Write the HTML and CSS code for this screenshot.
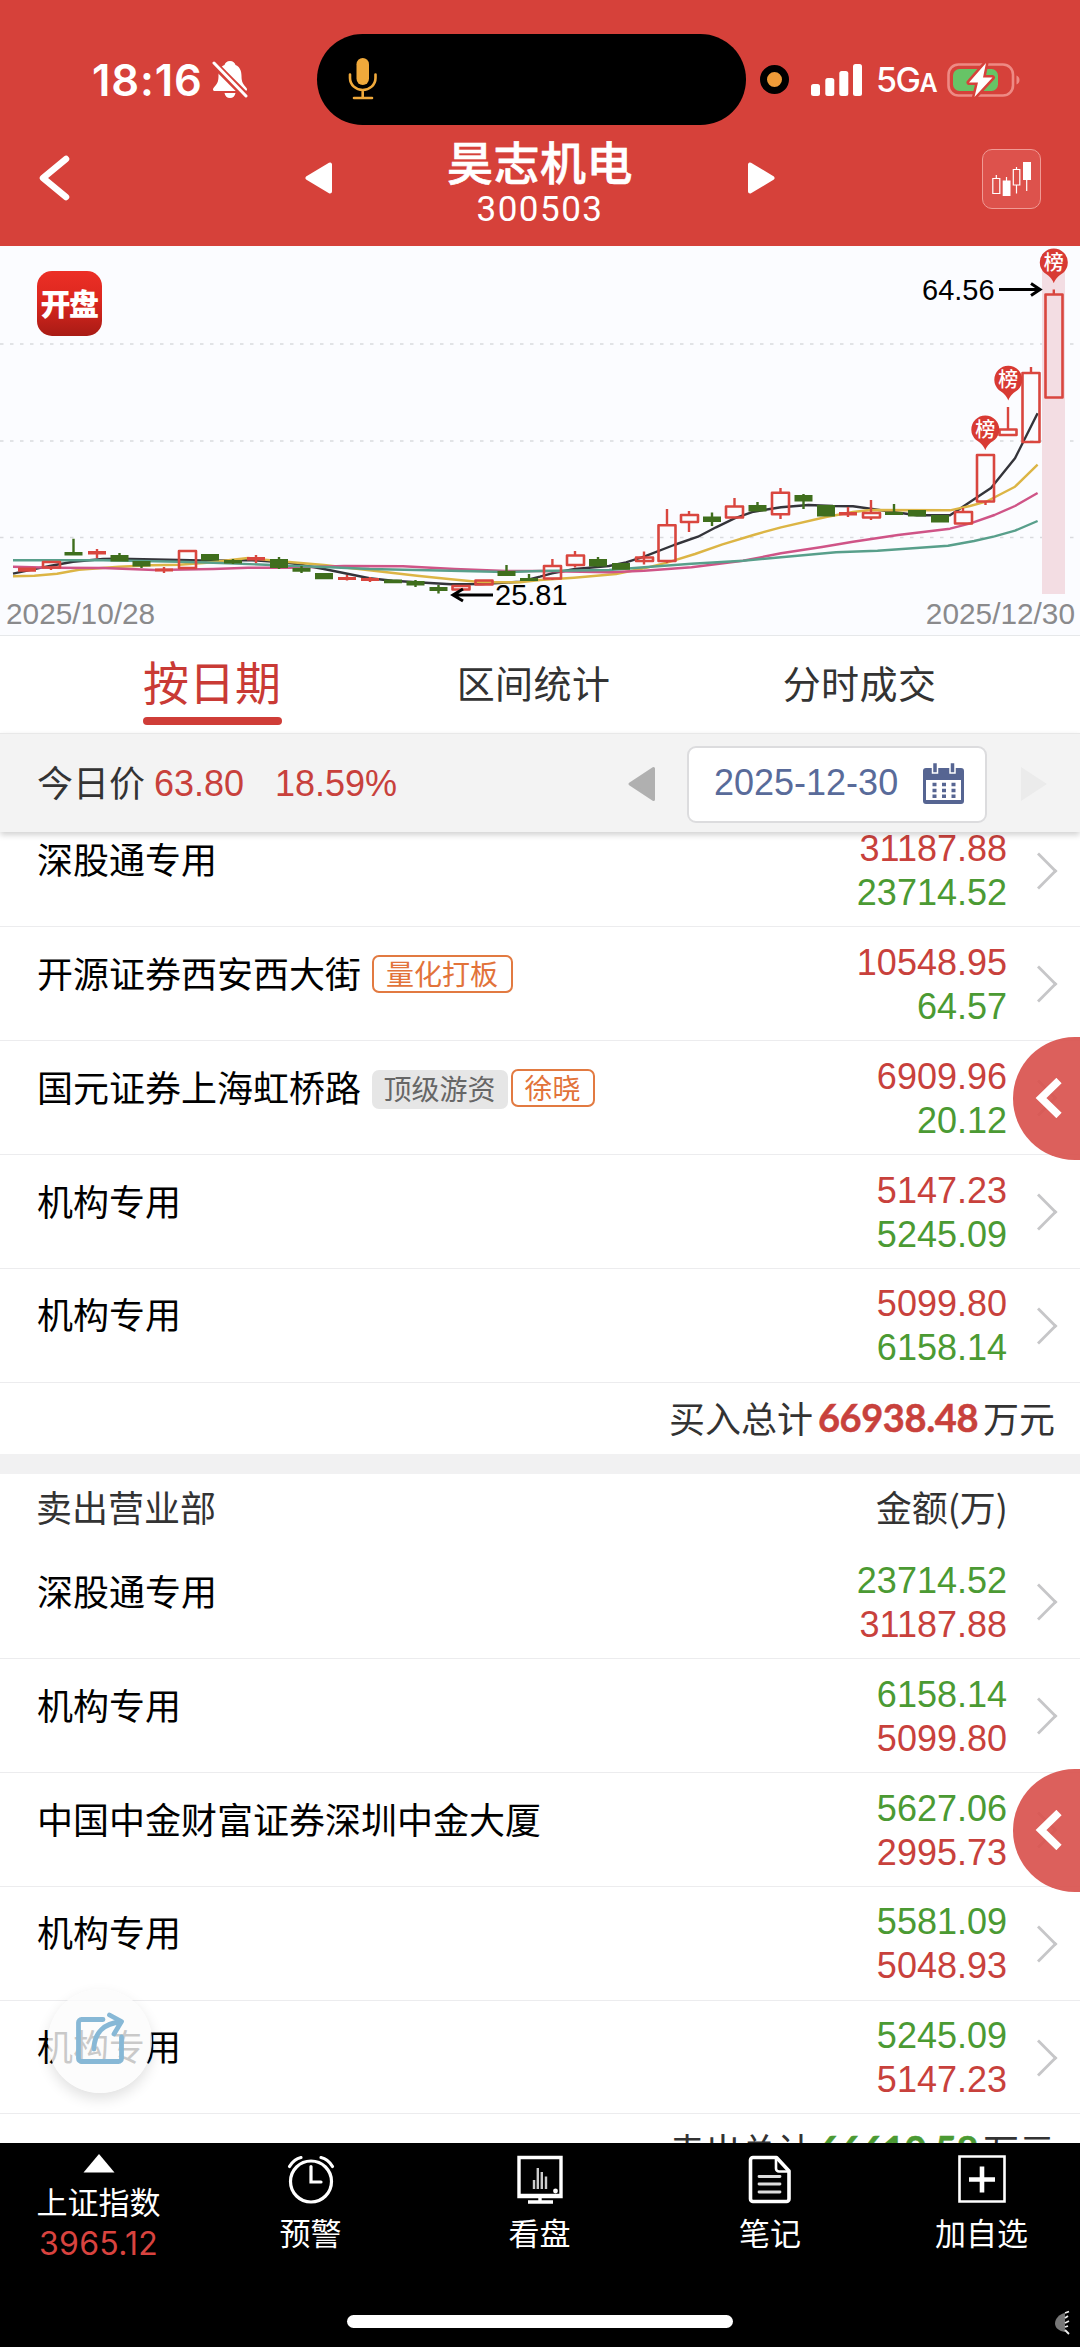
FILE: index.html
```html
<!DOCTYPE html>
<html lang="zh-CN">
<head>
<meta charset="utf-8">
<title>昊志机电 300503</title>
<link rel="stylesheet" href="styles.css">
</head>
<body>
<div class="app">
  <header class="header">
    <div class="status">
      <span class="clock">18:16</span>
      <svg class="bell" width="36" height="40" viewBox="0 0 36 40">
        <path fill="#fff" d="M18 1c-3 0-5 2-5.500 4C8 7 6.500 11 6.500 16c0 6-1.500 8-5 12-1 1.500-.5 3 1 3h31c1.500 0 2-1.500 1-3-3.500-4-5-6-5-12 0-5-1.500-9-6-11C23 3 21 1 18 1zM12.500 33h11c-.5 3-2.500 5-5.500 5s-5-2-5.500-5z"/>
        <path stroke="#d6413a" stroke-width="7.500" d="M0 2 36 38"/>
        <path stroke="#fff" stroke-width="3" stroke-linecap="round" d="M2 3 34 36"/>
      </svg>
      <div class="island">
        <svg class="mic" width="30" height="42" viewBox="0 0 30 42">
          <rect x="8.500" y="0" width="12.500" height="27" rx="6.250" fill="#f0a93b"/>
          <path fill="none" stroke="#f0a93b" stroke-width="2.600" stroke-linecap="round" d="M2 16.500v3.500c0 7 6 12 12.700 12S27.500 27 27.500 20v-3.500M14.700 32v7.500M6 40h18"/>
        </svg>
      </div>
      <span class="recording"></span>
      <svg class="signal" width="52" height="32" viewBox="0 0 52 32" fill="#fff">
        <rect x="0" y="20" width="9" height="12" rx="2.500"/><rect x="14.300" y="14" width="9" height="18" rx="2.500"/><rect x="28.300" y="7" width="9" height="25" rx="2.500"/><rect x="42" y="0" width="9" height="32" rx="2.500"/>
      </svg>
      <span class="network">5G<small>A</small></span>
      <svg class="battery" width="74" height="38" viewBox="0 0 74 38">
        <rect x="1.500" y="3.500" width="64.500" height="31" rx="10" fill="none" stroke="#ee8a84" stroke-width="2.600"/>
        <path fill="#ee8a84" d="M69.500 14.500c2 .7 3 2.500 3 4.500s-1 3.800-3 4.500z"/>
        <rect x="6" y="8" width="45" height="22" rx="6.500" fill="#67c466"/>
        <path fill="#fff" stroke="#d6413a" stroke-width="5" stroke-linejoin="round" paint-order="stroke" d="M39 2 22 21.500h9L27.500 36 45.500 16.500h-9.500z"/>
      </svg>
    </div>
    <div class="nav">
      <svg class="back" width="34" height="50" viewBox="0 0 34 50"><path fill="none" stroke="#fff" stroke-width="6.500" stroke-linecap="round" stroke-linejoin="round" d="M27 5 4 24 27 43"/></svg>
      <div class="switcher">
        <svg width="28" height="34" viewBox="0 0 28 34"><path fill="#fff" stroke="#fff" stroke-width="4" stroke-linejoin="round" d="M25 3.500v27L2.500 17z"/></svg>
        <div class="stock"><h1>昊志机电</h1><span>300503</span></div>
        <svg width="28" height="34" viewBox="0 0 28 34"><path fill="#fff" stroke="#fff" stroke-width="4" stroke-linejoin="round" d="M3 3.500v27L25.500 17z"/></svg>
      </div>
      <div class="kline">
        <svg width="40" height="38" viewBox="0 0 40 38">
          <path fill="none" stroke="#fff" stroke-width="1.200" d="M.8 18.500h7v15h-7zM4.300 15v3.500M14.500 17v4M21.300 9.500h6.500V25h-6.500zM24.500 7v2.500M24.500 25v8.500M34.700 20v11"/>
          <path fill="#fff" d="M10.700 20.500h7.800V36h-7.800zM31 2h8v18h-8z"/>
        </svg>
      </div>
    </div>
  </header>

  <section class="chart">
    <svg width="1080" height="389" viewBox="0 246 1080 389">
      <defs>
        <linearGradient id="logo" x1="0" y1="0" x2="0" y2="1"><stop offset="0" stop-color="#ec2f26"/><stop offset=".45" stop-color="#dc271f"/><stop offset="1" stop-color="#a81b15"/></linearGradient>
        <g id="pin"><path fill="#d83a33" d="M0 20.500C-2 15-5.500 12.500-9.500 10a14 14 0 1 1 19 0C5.500 12.500 2 15 0 20.500z"/><text class="pin-label" y="7.300">榜</text></g>
      </defs>
      <path class="grid" d="M0 344H1080M0 441H1080M0 537.500H1080"/>
      <rect x="1042" y="254" width="23" height="340" fill="#f3dde3"/>
      <rect x="37" y="271" width="65" height="65" rx="15" fill="url(#logo)"/>
      <text class="logo-label" x="69" y="314.500">开盘</text>

      <g class="ma">
        <polyline stroke="#34343a" points="13,573.7 51,565.7 73,561.7 103,559 119,558.7 179,560 213,560.7 248,560 289,562.7 324,569 369.5,578.3 392.5,580.7 417,582.3 451,584.3 482,584 520,581.700 540,576.700 552,573.3 575,569 609,566 626,562.3 644,556.7 674,545 698,536.7 716,527.3 734.5,518.3 753.5,511.7 781,507.3 808.5,505 833,506 853,506.3 874,509.3 917,515.3 950,515.3 991,488 1015,458.3 1037.6,413.3"/>
        <polyline stroke="#dcb545" points="13,576.3 34.4,575.7 57,573.7 79,569.7 119,566.7 151.5,565.3 179,564.7 206.6,562.7 248,558 289,562 324,565 369.5,570.3 417,575.7 451,579.3 482,582.3 520,582.3 540,580 574,577.7 616,574 644,568.3 667,562.7 695,554 722.5,544.3 753.5,535 781,527.3 826,517 853,512 870.6,510 950,510.3 970,506 986,501.7 1015,486.7 1037.6,464.7"/>
        <polyline stroke="#cf5487" points="13,566.7 51,567.7 103,568 155,570 213.5,569 248,567.7 289,567.7 344,566 403,566.3 454.5,569 506,571 540,571 609,572.3 644,570.7 691.5,567.3 743,560.7 781,553.3 822,547 853,541.7 898,535 950,528.7 970.5,523.3 994.5,515 1015,506 1037.6,493"/>
        <polyline stroke="#589f8b" points="13,560.3 103,560.3 179,561.7 213.5,562.7 289,565.7 324,567 369.5,569 451,570.7 506,572 540,571 609,570 644,567.3 691.5,563.7 743,560.7 781,557.3 836,552.3 877.5,550.7 948,545.7 974,541 994.5,536.3 1015,530.7 1037.6,521"/>
      </g>

      <path class="down wick" d="M73.500 538.700V555M119.500 553V561M141.500 561V568M233 559V564M279 557V569M301.500 566V573M415.500 580V587M438.500 585V593.500M506.500 565V576M529 574V581M598 557V566.500M712 512.500V526M757.500 502V511M803.500 494V509M894 504V515"/>
      <path class="down body" d="M73.500 552V555.500M119.500 555V561.500M141.500 561V566.500M210 554V560.500M233 560V563.500M279 559V568M301.500 568V571.700M324 573V579.300M393 579.500V583.300M415.500 581V585.500M438.500 587V591M506.500 571V576M529 578V581M598 559V566.500M621 563V569.700M712 516.500V522M757.500 505V511.500M803.500 495V501.500M826 505V516.500M894 512V515M917 510V516.500M940 515V522.500"/>
      <path class="up wick" d="M51 567.500V570M97 549V558M164 567V573M256 555V563M347 575V580.500M370 577V582M552.400 559V566M552.400 578V580M575 551V555.500M575 565V567.500M644 551.500V564.500M667 509V525M667 561V563M689 511V515M689 522V532M734.500 498V506.500M780.500 488V492.500M780.500 514.500V519M848 507V517M871 500V512.500M871 517.500V520M963 508V512M985.500 501.500V505M1008 407V429M1031 367V373M1053.800 289.500V294.500"/>
      <path class="up body" d="M27 567.500V571.700M97 551V554.500M164 568.500V571.500M256 557V560.500M347 577V580M370 578V581M848 512V515.500"/>
      <path class="up hollow" d="M43 562h17v5.500h-17zM179 551h17v17h-17zM452.500 586h17v3.500h-17zM475.500 580.500h17v4h-17zM544 566h17v12.500h-17zM567 555.500h17v9.500h-17zM636 557.500h17v3.500h-17zM658.500 525.300h17v35.700h-17zM681 515h17v7h-17zM726 506.500h17v11h-17zM772 492.700h17v21.600h-17zM863 513h17v4.500h-17zM955 512h17v11.500h-17zM977 455h17v46.500h-17zM999.500 429.500h17v5.500h-17zM1022.500 373h17v69h-17zM1045.500 294.500h17v103h-17z"/>

      <use href="#pin" x="1053.800" y="262.700"/>
      <use href="#pin" x="1008.300" y="380"/>
      <use href="#pin" x="985.300" y="429.700"/>

      <path class="arrow" d="M999 289.500H1039M1031 283.500l9 6-9 6M493 595H454M463 589l-10 6 10 6"/>
      <text class="price" x="922" y="299.500">64.56</text>
      <text class="price" x="495" y="604.500">25.81</text>
      <text class="date" x="6" y="624">2025/10/28</text>
      <text class="date end" x="1075" y="624">2025/12/30</text>
    </svg>
  </section>

  <nav class="tabs">
    <a class="tab active">按日期</a>
    <a class="tab range">区间统计</a>
    <a class="tab">分时成交</a>
  </nav>

  <section class="toolbar">
    <span class="today">今日价</span>
    <span class="quote">63.80</span>
    <span class="quote change">18.59%</span>
    <svg class="prev" width="28" height="36" viewBox="0 0 28 36"><path fill="#b0b0b0" stroke="#b0b0b0" stroke-width="3" stroke-linejoin="round" d="M25.500 2.500v31L2 18z"/></svg>
    <div class="picker">
      <span>2025-12-30</span>
      <svg width="43" height="42" viewBox="0 0 43 42">
        <path fill="#566592" d="M4 5h35a3 3 0 0 1 3 3v30a3 3 0 0 1-3 3H4a3 3 0 0 1-3-3V8a3 3 0 0 1 3-3zm0 12v20h35V17z" fill-rule="evenodd"/>
        <path fill="#566592" stroke="#fff" stroke-width="1.500" d="M10.500-.5h5v10.500h-5zM28-.5h5v10.500h-5z"/>
        <path stroke="#566592" stroke-width="3.400" stroke-dasharray="4 5.500" d="M10.500 21.500H34M10.500 27.500H34M10.500 33.200H34"/>
      </svg>
    </div>
    <svg class="next" width="28" height="36" viewBox="0 0 28 36"><path fill="#ebebeb" d="M1 1v34l26-17z"/></svg>
  </section>

  <main class="list">
    <ul class="rows">
      <li class="row first"><span class="name">深股通专用</span><span class="amount"><b class="red">31187.88</b><b class="green">23714.52</b></span><i class="more"></i></li>
      <li class="row"><span class="name">开源证券西安西大街</span><span class="tag hot">量化打板</span><span class="amount"><b class="red">10548.95</b><b class="green">64.57</b></span><i class="more"></i></li>
      <li class="row"><span class="name">国元证券上海虹桥路</span><span class="tag plain">顶级游资</span><span class="tag hot person">徐晓</span><span class="amount"><b class="red">6909.96</b><b class="green">20.12</b></span><i class="more"></i>
        <span class="drawer"><svg width="28" height="40" viewBox="0 0 28 40"><path fill="none" stroke="#fff" stroke-width="7.500" d="M24 2.500 6 20l18 17.500"/></svg></span></li>
      <li class="row"><span class="name">机构专用</span><span class="amount"><b class="red">5147.23</b><b class="green">5245.09</b></span><i class="more"></i></li>
      <li class="row"><span class="name">机构专用</span><span class="amount"><b class="red">5099.80</b><b class="green">6158.14</b></span><i class="more"></i></li>
    </ul>
    <div class="total"><span>买入总计</span><strong class="red">66938.48</strong><span>万元</span></div>
    <div class="divider"></div>
    <div class="heading"><span>卖出营业部</span><span>金额(万)</span></div>
    <ul class="rows">
      <li class="row"><span class="name">深股通专用</span><span class="amount"><b class="green">23714.52</b><b class="red">31187.88</b></span><i class="more"></i></li>
      <li class="row"><span class="name">机构专用</span><span class="amount"><b class="green">6158.14</b><b class="red">5099.80</b></span><i class="more"></i></li>
      <li class="row"><span class="name">中国中金财富证券深圳中金大厦</span><span class="amount"><b class="green">5627.06</b><b class="red">2995.73</b></span><i class="more"></i>
        <span class="drawer"><svg width="28" height="40" viewBox="0 0 28 40"><path fill="none" stroke="#fff" stroke-width="7.500" d="M24 2.500 6 20l18 17.500"/></svg></span></li>
      <li class="row"><span class="name">机构专用</span><span class="amount"><b class="green">5581.09</b><b class="red">5048.93</b></span><i class="more"></i></li>
      <li class="row"><span class="name">机构专用</span><span class="amount"><b class="green">5245.09</b><b class="red">5147.23</b></span><i class="more"></i></li>
    </ul>
    <div class="total"><span>卖出总计</span><strong class="green">66610.58</strong><span>万元</span></div>
    <div class="share">
      <svg width="50" height="54" viewBox="0 0 50 54"><path fill="none" stroke="#87b8d6" stroke-width="4.800" stroke-linecap="round" stroke-linejoin="round" d="M28 8.500H6.500a3 3 0 0 0-3 3v36a3 3 0 0 0 3 3h37a3 3 0 0 0 3-3V26M19 38C19 22 29 12 46 11M34.500 4 46.500 10.500 39 23"/></svg>
    </div>
  </main>

  <footer class="bottom">
    <div class="actions">
      <div class="action index">
        <svg width="32" height="19" viewBox="0 0 32 19"><path fill="#fff" d="M16 0 31.500 18.500H.5z"/></svg>
        <span>上证指数</span><em>3965.12</em>
      </div>
      <div class="action">
        <svg width="50" height="50" viewBox="0 0 50 50"><g fill="none" stroke="#fff" stroke-width="3.200" stroke-linecap="round"><ellipse cx="25" cy="27.500" rx="20.500" ry="20.500"/><path d="M25 12.500v15.500h10M3.500 12.500C6.500 7.500 10 4.500 15 3.500M46.500 12.500C43.500 7.500 40 4.500 35 3.500"/></g></svg>
        <span>预警</span>
      </div>
      <div class="action">
        <svg width="50" height="50" viewBox="0 0 50 50"><path fill="none" stroke="#fff" stroke-width="3.400" d="M4 3.500h42v39H4zM4 41.500h42M25 43v5M13 48h25"/><path stroke="#ccc" stroke-width="2.400" d="M19 26v9M22.800 14v21M26.800 18v17M31 22.500v12.500"/><circle cx="40.500" cy="37" r="2.400" fill="#fff"/></svg>
        <span>看盘</span>
      </div>
      <div class="action">
        <svg width="50" height="50" viewBox="0 0 50 50"><g fill="none" stroke="#fff" stroke-width="3.600" stroke-linejoin="round"><path d="M8 3.500h23.500L44 17v28a2.500 2.500 0 0 1-2.500 2.500H8A2.500 2.500 0 0 1 5.500 45V6A2.500 2.500 0 0 1 8 3.500z"/><path stroke-width="2.600" d="M31 4v10.500a3 3 0 0 0 3 3h10"/><path stroke="#ddd" stroke-width="2.800" stroke-linecap="round" d="M14 22.500h21M14 30h21M14 38h21"/></g></svg>
        <span>笔记</span>
      </div>
      <div class="action">
        <svg width="50" height="50" viewBox="0 0 50 50"><path fill="none" stroke="#fff" stroke-width="2.600" d="M2.500 2.500h45v45h-45z"/><path stroke="#fff" stroke-width="4.600" d="M25 12.500v26M12 25.500h26"/></svg>
        <span>加自选</span>
      </div>
    </div>
    <div class="home"></div>
    <svg class="mark" width="18" height="26" viewBox="0 0 18 26"><path fill="#777" d="M11 3C5 4 1 9 1 13.500S5 21 11 22z"/><path fill="none" stroke="#eee" stroke-width="1.800" d="M11 3l4-1.500M11 8l3-2M11 13l4-2M11 17l3-1M11 20l4 4"/></svg>
  </footer>
</div>
</body>
</html>
```
FILE: styles.css
```css
* { box-sizing: border-box; }
body {
  margin: 0;
  background: #fff;
  font-family: "Liberation Sans", "Noto Sans CJK SC", sans-serif;
  color: #333;
}
svg { display: block; flex: none; }
.app { width: 1080px; height: 2347px; overflow: hidden; display: flex; flex-direction: column; }
.red { color: #c8413c; }
.green { color: #4b9a33; }

/* header */
.header { height: 246px; background: #d6413a; color: #fff; flex: none; }
.status { display: flex; align-items: center; height: 125px; padding: 34px 0 0 92px; }
.clock { width: 120px; font: 600 43.5px/50px Inter, sans-serif; letter-spacing: .9px; }
.bell { margin-right: 69px; }
.island { width: 429px; height: 91px; border-radius: 46px; background: #000; padding: 24px 0 0 31px; flex: none; }
.recording { width: 29px; height: 29px; margin: 0 22px 0 14px; border-radius: 50%; border: 7.5px solid #000; background: #ef9b38; flex: none; }
.network { width: 71px; margin-left: 13px; font: 500 34px/40px Inter, sans-serif; letter-spacing: -1.5px; margin-top: 4px; white-space: nowrap; }
.network small { font-size: 25px; font-weight: 600; }
.nav { display: flex; height: 121px; }
.back { margin: 29px 232px 0 39px; }
.switcher { display: flex; justify-content: space-between; width: 470px; flex: none; }
.switcher > svg { margin-top: 36px; }
.stock { display: flex; flex-direction: column; align-items: center; padding-top: 11px; }
.stock h1 { margin: 0; font: 500 46px/48px "Noto Sans CJK SC", sans-serif; -webkit-text-stroke: .6px #fff; letter-spacing: .5px; }
.stock span { font: 400 35px/40px Roboto, sans-serif; letter-spacing: 1.5px; margin-top: 6px; }
.kline { width: 59px; height: 60px; margin: 24px 0 0 207px; padding: 10px 0 0 9px; border: 1px solid #f09a94; border-radius: 10px; background: #dd524c; flex: none; }

/* price chart */
.chart { height: 389px; background: #fbfcff; flex: none; }
.grid { stroke: #d9dade; stroke-width: 1.5; stroke-dasharray: 3.5 6.5; }
.ma { fill: none; stroke-width: 2.4; stroke-linejoin: round; }
.wick { stroke-width: 2.4; fill: none; }
.body { stroke-width: 18; fill: none; }
.hollow { stroke-width: 2.6; fill: none; stroke-linejoin: round; }
.up { stroke: #d9463f; }
.down { stroke: #3f6e1d; }
.arrow { fill: none; stroke: #000; stroke-width: 3; }
.price { font-size: 29px; fill: #000; }
.date { font-size: 29.8px; fill: #8a8a8c; }
.end { text-anchor: end; }
.pin-label { font: 500 20px "Noto Sans CJK SC", sans-serif; fill: #fff; text-anchor: middle; }
.logo-label { font: 900 30px "Noto Sans CJK SC", sans-serif; fill: #fff; text-anchor: middle; letter-spacing: -1.5px; }

/* tabs */
.tabs { display: grid; grid-template-columns: repeat(3, 323px); padding: 0 60px 0 52px; height: 98px; border-top: 1px solid #e6e8ea; justify-items: center; flex: none; }
.tab { font: 400 38px/91px "Noto Sans CJK SC", sans-serif; letter-spacing: .4px; }
.range { margin-left: -6px; }
.active { display: flex; flex-direction: column; font-size: 46px; line-height: 82px; padding-top: 3px; color: #c93a35; margin-left: -2px; height: 90px; width: 139px; letter-spacing: 0; }
.active::after { content: ""; height: 8px; border-radius: 4px; background: #cf3d38; margin-top: -4px; }

/* date toolbar */
.toolbar { position: relative; z-index: 1; display: flex; align-items: center; height: 99px; padding-left: 37px; background: #f3f3f3; border-top: 1px solid #e8e8e8; box-shadow: 0 3px 6px rgba(0, 0, 0, .18); font-size: 36px; flex: none; }
.today { width: 117px; font-family: "Noto Sans CJK SC", sans-serif; line-height: 52px; margin-top: -4px; }
.quote { color: #c8413c; width: 121px; line-height: 44px; margin-top: 1px; }
.change { width: 353px; }
.picker { display: flex; justify-content: space-between; width: 300px; height: 77px; margin: 3px 33px 0 31px; padding: 15px 20px 0 25px; border: 2.5px solid #dcdcde; border-radius: 9px; background: #fff; color: #596b9a; line-height: 42px; flex: none; }
.picker span { margin-top: -1px; }
.prev, .next { margin-top: 2px; }

/* seat list */
.list { position: relative; height: 1311px; overflow: hidden; flex: none; }
.rows { margin: 0; padding: 0; list-style: none; }
.rows:first-child { margin-top: -18.4px; }
.row { position: relative; display: flex; align-items: flex-start; height: 113.8px; padding: 0 23px 0 37px; border-bottom: 1.5px solid #ececee; }
.name { font: 400 36px/52px "Noto Sans CJK SC", sans-serif; color: #000; margin: 18.5px 10.5px 0 0; white-space: nowrap; }
.tag { height: 38.5px; margin-top: 27.5px; padding: 0 12.5px; border: 2px solid #e27a41; border-radius: 7px; font: 400 28px/33px "Noto Sans CJK SC", sans-serif; color: #e2733a; }
.plain { border-color: #e6e6e6; background: #e6e6e6; color: #666; margin-top: 29px; padding: 0 10px; }
.person { margin-left: 3px; padding: 0 12px; }
.amount { margin: 13.6px 26px 0 auto; display: flex; flex-direction: column; align-items: flex-end; }
.amount b { font-weight: 400; font-size: 36px; line-height: 44px; }
.more { width: 28px; height: 28px; margin: 43px 4px 0 -8px; border: solid #c6c6c8; border-width: 3.5px 3.5px 0 0; transform: rotate(45deg) scale(.93); }
.drawer { position: absolute; right: 0; top: -4px; width: 67px; height: 123px; border-radius: 62px 0 0 62px; background: rgba(217, 82, 78, .92); padding: 41px 0 0 22px; }
.total { display: flex; align-items: center; justify-content: flex-end; height: 71.7px; padding: 0 25px 2px 0; font: 400 36px/52px "Noto Sans CJK SC", sans-serif; white-space: nowrap; }
.total strong { font: 700 38px/50px Lato, sans-serif; -webkit-text-stroke: .5px; letter-spacing: -.4px; margin: 0 6px; width: 158px; display: flex; justify-content: center; }
.divider { height: 19.6px; background: #f1f1f2; }
.heading { display: flex; justify-content: space-between; height: 71.6px; padding: 6px 72px 0 36px; font: 400 36px/52px "Noto Sans CJK SC", sans-serif; }
.share { position: absolute; left: 48px; top: 1157px; width: 104px; height: 104px; border-radius: 50%; background: rgba(251, 251, 251, .8); box-shadow: 0 6px 14px rgba(0, 0, 0, .12); padding: 22px 0 0 27px; }

/* bottom bar */
.bottom { position: relative; flex: 1; background: #000; color: #fff; }
.actions { display: grid; grid-template-columns: 197px 227px 231px 230px 193px; height: 172px; }
.action { display: flex; flex-direction: column; align-items: center; padding-top: 11px; font: 400 31px/40px "Noto Sans CJK SC", sans-serif; }
.action span { margin-top: 8px; }
.index span { margin-top: 7px; line-height: 42px; }
.index em { font: 400 32px/36px Inter, sans-serif; color: #d9433f; margin-top: 4px; letter-spacing: .3px; }
.home { width: 386px; height: 13px; margin-left: 347px; border-radius: 7px; background: #fff; }
.mark { position: absolute; left: 1054px; top: 167px; }
```
